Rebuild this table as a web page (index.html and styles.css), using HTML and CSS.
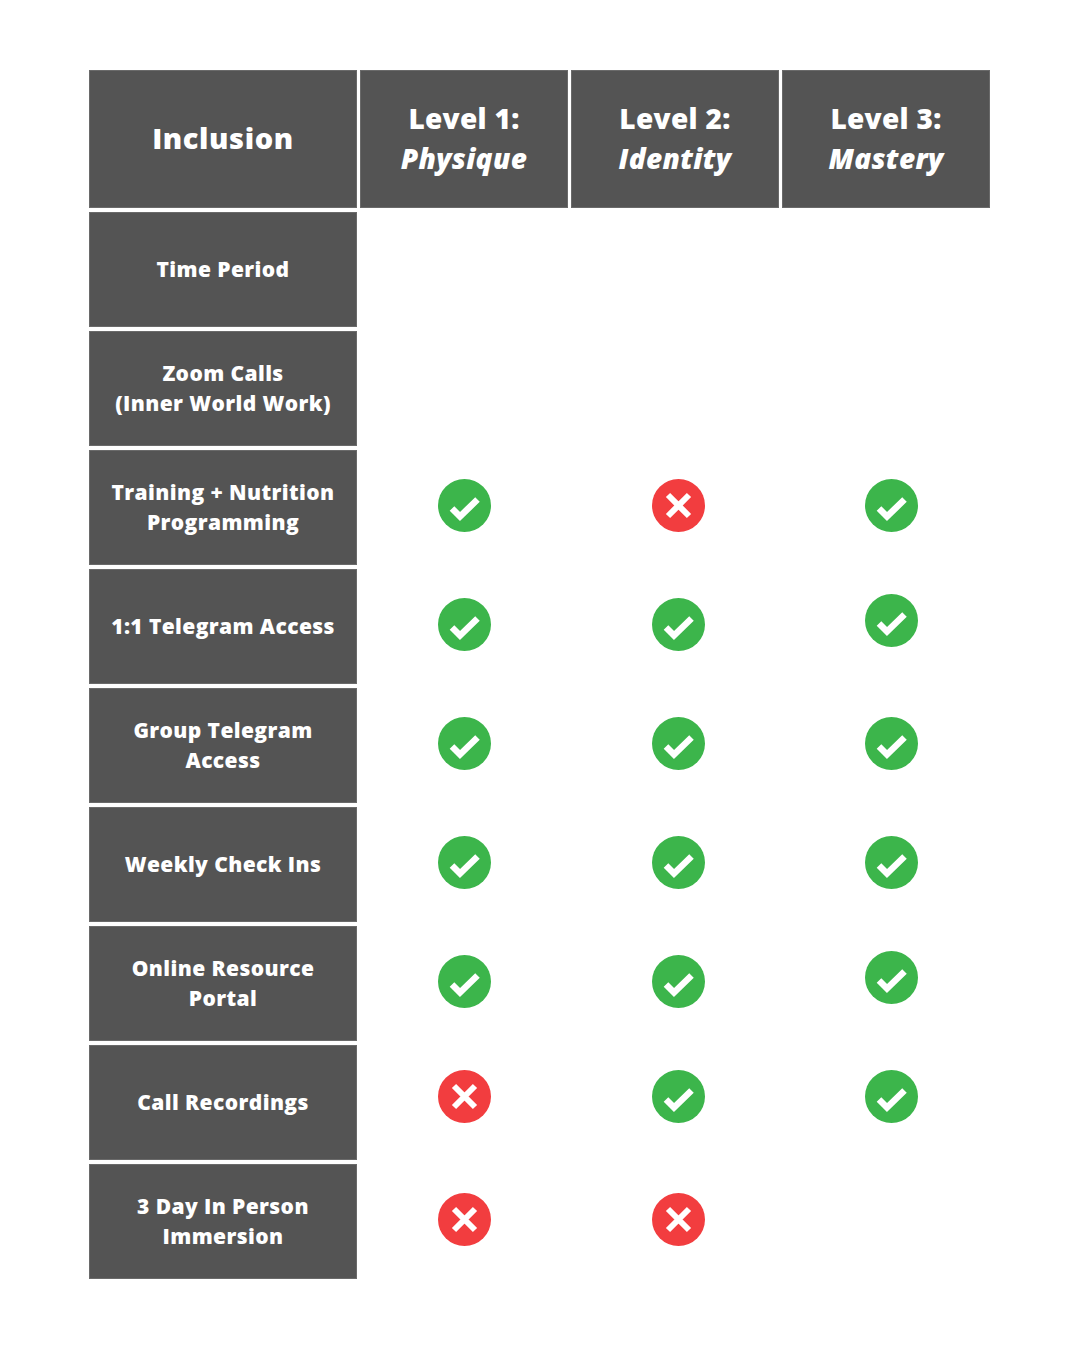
FILE: index.html
```html
<!DOCTYPE html>
<html>
<head>
<meta charset="utf-8">
<link rel="stylesheet" href="styles.css">
</head>
<body>
<svg width="0" height="0" class="defs">
  <defs>
    <symbol id="yes" viewBox="0 0 53 53">
      <circle cx="26.5" cy="26.5" r="26.5" fill="#3cb54b"/>
      <path d="M14 29.5 L22 37.5 L39.5 20.5" fill="none" stroke="#fff" stroke-width="6.5" stroke-linecap="butt" stroke-linejoin="miter"/>
    </symbol>
    <symbol id="no" viewBox="0 0 53 53">
      <circle cx="26.5" cy="26.5" r="26.5" fill="#f23d3f"/>
      <path d="M16 16 L37 37 M37 16 L16 37" fill="none" stroke="#fff" stroke-width="6"/>
    </symbol>
  </defs>
</svg>
<div class="table">
  <div class="cell head first"><span>Inclusion</span></div>
  <div class="cell head"><span>Level 1:<br><em>Physique</em></span></div>
  <div class="cell head"><span>Level 2:<br><em>Identity</em></span></div>
  <div class="cell head"><span>Level 3:<br><em>Mastery</em></span></div>

  <div class="cell label"><span>Time Period</span></div>
  <div class="mark"></div><div class="mark c2"></div><div class="mark c3"></div>

  <div class="cell label"><span>Zoom Calls<br>(Inner World Work)</span></div>
  <div class="mark"></div><div class="mark c2"></div><div class="mark c3"></div>

  <div class="cell label"><span>Training + Nutrition<br>Programming</span></div>
  <div class="mark"><svg class="icon"><use href="#yes"/></svg></div>
  <div class="mark c2"><svg class="icon"><use href="#no"/></svg></div>
  <div class="mark c3"><svg class="icon"><use href="#yes"/></svg></div>

  <div class="cell label"><span>1:1 Telegram Access</span></div>
  <div class="mark"><svg class="icon"><use href="#yes"/></svg></div>
  <div class="mark c2"><svg class="icon"><use href="#yes"/></svg></div>
  <div class="mark c3 up"><svg class="icon"><use href="#yes"/></svg></div>

  <div class="cell label"><span>Group Telegram<br>Access</span></div>
  <div class="mark"><svg class="icon"><use href="#yes"/></svg></div>
  <div class="mark c2"><svg class="icon"><use href="#yes"/></svg></div>
  <div class="mark c3"><svg class="icon"><use href="#yes"/></svg></div>

  <div class="cell label"><span>Weekly Check Ins</span></div>
  <div class="mark"><svg class="icon"><use href="#yes"/></svg></div>
  <div class="mark c2"><svg class="icon"><use href="#yes"/></svg></div>
  <div class="mark c3"><svg class="icon"><use href="#yes"/></svg></div>

  <div class="cell label"><span>Online Resource<br>Portal</span></div>
  <div class="mark"><svg class="icon"><use href="#yes"/></svg></div>
  <div class="mark c2"><svg class="icon"><use href="#yes"/></svg></div>
  <div class="mark c3 up"><svg class="icon"><use href="#yes"/></svg></div>

  <div class="cell label"><span>Call Recordings</span></div>
  <div class="mark up"><svg class="icon"><use href="#no"/></svg></div>
  <div class="mark c2 up"><svg class="icon"><use href="#yes"/></svg></div>
  <div class="mark c3 up"><svg class="icon"><use href="#yes"/></svg></div>

  <div class="cell label"><span>3 Day In Person<br>Immersion</span></div>
  <div class="mark"><svg class="icon"><use href="#no"/></svg></div>
  <div class="mark c2"><svg class="icon"><use href="#no"/></svg></div>
  <div class="mark c3"></div>
</div>
</body>
</html>
```

FILE: styles.css
```css
html, body {
  margin: 0;
  padding: 0;
  background: #ffffff;
}
body {
  width: 1080px;
  height: 1350px;
  font-family: "Open Sans", "DejaVu Sans", sans-serif;
}
.defs {
  position: absolute;
  width: 0;
  height: 0;
}
.table {
  display: grid;
  grid-template-columns: 268px 208px 208px 208px;
  grid-template-rows: 138px repeat(9, 115px);
  column-gap: 3px;
  row-gap: 4px;
  padding: 70px 0 0 89px;
}
.cell {
  background: #545454;
  box-shadow: inset 0 0 0 1px #6a6a6a;
  color: #ffffff;
  font-weight: 800;
  display: flex;
  align-items: center;
  justify-content: center;
  text-align: center;
}
.head {
  font-size: 28px;
  line-height: 40px;
  letter-spacing: 0.3px;
  padding-bottom: 2px;
}
.head em {
  font-style: italic;
}
.head.first {
  font-size: 29px;
  letter-spacing: 0.6px;
}
.label {
  font-size: 21px;
  line-height: 30px;
  letter-spacing: 0.4px;
  padding-bottom: 2px;
}
.mark {
  display: flex;
  align-items: center;
  justify-content: center;
  padding-bottom: 5px;
}
.mark.c2 {
  padding-left: 6px;
}
.mark.c3 {
  padding-left: 11px;
}
.mark.up {
  padding-bottom: 12px;
}
.icon {
  width: 53px;
  height: 53px;
  display: block;
}
```
